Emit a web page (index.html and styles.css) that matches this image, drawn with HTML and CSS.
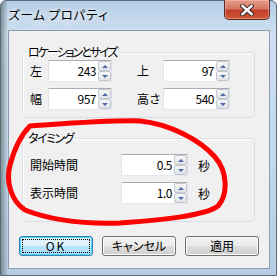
FILE: index.html
```html
<!DOCTYPE html>
<html lang="ja">
<head>
  <meta charset="UTF-8">
  <title>ズーム プロパティ</title>
  <link rel="stylesheet" href="styles.css">
</head>
<body>

  <div class="window">
    <div class="titlebar">
      <span class="title">ズーム プロパティ</span>
      <button class="close">
        <svg width="14" height="12" viewBox="0 0 14 12">
          <path d="M2.5 2 L11.5 10 M11.5 2 L2.5 10" stroke="#3a2a28" stroke-width="4.4" stroke-linecap="square"/>
          <path d="M2.5 2 L11.5 10 M11.5 2 L2.5 10" stroke="#fff" stroke-width="2.4" stroke-linecap="square"/>
        </svg>
      </button>
    </div>

    <div class="client">
      <fieldset class="group loc">
        <legend>ロケーションとサイズ</legend>
        <div class="loc-grid">
          <label>左</label>
          <div class="spin w64"><span class="val">243</span><span class="arrows"><i class="up"></i><i class="down"></i></span></div>
          <label class="right">上</label>
          <div class="spin w67"><span class="val">97</span><span class="arrows"><i class="up"></i><i class="down"></i></span></div>

          <label>幅</label>
          <div class="spin w64"><span class="val">957</span><span class="arrows"><i class="up"></i><i class="down"></i></span></div>
          <label class="right">高さ</label>
          <div class="spin w67"><span class="val">540</span><span class="arrows"><i class="up"></i><i class="down"></i></span></div>
        </div>
      </fieldset>

      <fieldset class="group timing">
        <legend>タイミング</legend>
        <div class="time-grid">
          <label>開始時間</label>
          <div class="spin w67"><span class="val">0.5</span><span class="arrows"><i class="up"></i><i class="down"></i></span></div>
          <span class="unit">秒</span>

          <label>表示時間</label>
          <div class="spin w67"><span class="val">1.0</span><span class="arrows"><i class="up"></i><i class="down"></i></span></div>
          <span class="unit">秒</span>
        </div>
      </fieldset>

      <div class="buttons">
        <button class="btn default"><span class="focus">OK</span></button>
        <button class="btn">キャンセル</button>
        <button class="btn">適用</button>
      </div>
    </div>

    <!-- hand drawn mark over the timing group -->
    <svg class="mark" width="277" height="276" viewBox="0 0 277 276">
      <path d="M30 126 C 60 124, 110 120, 140 121 C 170 124, 200 140, 215 157 C 228 172, 228 195, 218 206 C 205 216, 160 220, 120 223 C 85 224, 50 220, 25 210 C 10 200, 6 180, 10 165 C 14 150, 20 136, 30 126 Z"
            fill="none" stroke="#ff0000" stroke-width="5" stroke-linejoin="round"/>
    </svg>
  </div>

</body>
</html>
```

FILE: styles.css
```css
* {
  box-sizing: border-box;
}

body {
  margin: 0;
  font-family: "Noto Sans CJK JP", sans-serif;
  font-size: 12px;
  color: #000;
}

.window {
  position: relative;
  width: 277px;
  height: 276px;
  padding: 0 6px 0 7px;
  border: 1px solid #5b6b7b;
  border-radius: 6px 6px 0 0;
  background:
    linear-gradient(90deg, rgba(70, 90, 80, 0.55) 0, rgba(70, 90, 80, 0) 7px),
    linear-gradient(180deg, #b4cce4 0%, #cfe0f1 12%, #c3d7eb 60%, #b6cde5 100%);
}

.titlebar {
  height: 29px;
  display: flex;
  justify-content: space-between;
  align-items: flex-start;
}

.title {
  padding-top: 6px;
  line-height: 16px;
  font-size: 12.5px;
  text-shadow: 0 0 5px #fff, 0 0 8px #fff;
}

.close {
  width: 46px;
  height: 20px;
  margin-top: -1px;
  padding: 0;
  display: flex;
  align-items: center;
  justify-content: center;
  border: 1px solid #5a2a22;
  border-top: none;
  border-radius: 0 0 5px 5px;
  background: linear-gradient(180deg, #e59a8a 0%, #d47a66 45%, #c2402a 55%, #cf5538 100%);
  box-shadow: inset 0 0 0 1px rgba(255, 200, 190, 0.45);
}

.client {
  height: 239px;
  border: 1px solid #8b9cae;
  background: #f0f0f0;
}

.group {
  margin: 0 14px 0 13px;
  border: 1px solid #d5dfe5;
  border-radius: 3px;
  box-shadow: inset 1px 1px 0 #fff;
}

.group legend {
  margin-left: -3px;
  padding: 0 2px 0 1px;
  line-height: 14px;
  font-feature-settings: "palt";
}

.loc legend {
  letter-spacing: -2px;
}

.timing legend {
  letter-spacing: -1.5px;
}

.loc {
  margin-top: 14px;
  padding: 1px 0 7px 7px;
}

.timing {
  margin-top: 13px;
  padding: 9px 0 17px 7px;
}

.loc-grid {
  display: grid;
  grid-template-columns: 18px 64px 51px 67px;
  grid-auto-rows: 22px;
  row-gap: 6px;
  align-items: center;
}

.loc-grid .right {
  padding-left: 25px;
}

.time-grid {
  display: grid;
  grid-template-columns: 91px 67px 30px;
  grid-auto-rows: 22px;
  row-gap: 6px;
  align-items: center;
}

.unit {
  padding-left: 10px;
}

label {
  line-height: 14px;
}

.spin {
  height: 22px;
  display: flex;
  border: 1px solid #abadb3;
  border-color: #abadb3 #dbdfe6 #e3e9ef #e2e3ea;
  background: #fff;
}

.w64 {
  width: 64px;
}

.w67 {
  width: 67px;
}

.val {
  flex: 1;
  text-align: right;
  padding-right: 2px;
  line-height: 20px;
  letter-spacing: -0.5px;
}

.arrows {
  width: 13px;
  display: flex;
  flex-direction: column;
}

.arrows i {
  flex: 1;
  display: flex;
  align-items: center;
  justify-content: center;
  border: 1px solid #c3c7cf;
  border-radius: 2px;
  background: linear-gradient(180deg, #f6f6f6, #e1e3e7);
}

.arrows i::after {
  content: "";
  border-left: 3px solid transparent;
  border-right: 3px solid transparent;
}

.arrows .up::after {
  border-bottom: 3px solid #4d6aa9;
}

.arrows .down::after {
  border-top: 3px solid #4d6aa9;
}

.buttons {
  margin-top: 14px;
  display: flex;
  justify-content: center;
  gap: 9px;
}

.btn {
  width: 74px;
  height: 20px;
  padding: 0;
  font-family: inherit;
  font-size: 12px;
  line-height: 16px;
  border: 1px solid #707070;
  border-radius: 3px;
  background: linear-gradient(180deg, #f2f2f2 0%, #ebebeb 50%, #dddddd 51%, #cfcfcf 100%);
  box-shadow: inset 0 0 0 1px #fcfcfc;
  font-feature-settings: "palt";
}

.btn.default {
  border-color: #3c7fb1;
  background: linear-gradient(180deg, #eaf6fd 0%, #d9f0fc 50%, #bee6fd 51%, #a7d9f5 100%);
  box-shadow: inset 0 0 0 1px #48d6fb;
  padding: 2px;
}

.focus {
  display: block;
  height: 100%;
  border: 1px dotted #000;
  line-height: 12px;
  letter-spacing: 2px;
}

.mark {
  position: absolute;
  left: -1px;
  top: -1px;
  pointer-events: none;
  filter: blur(0.4px);
}
```
